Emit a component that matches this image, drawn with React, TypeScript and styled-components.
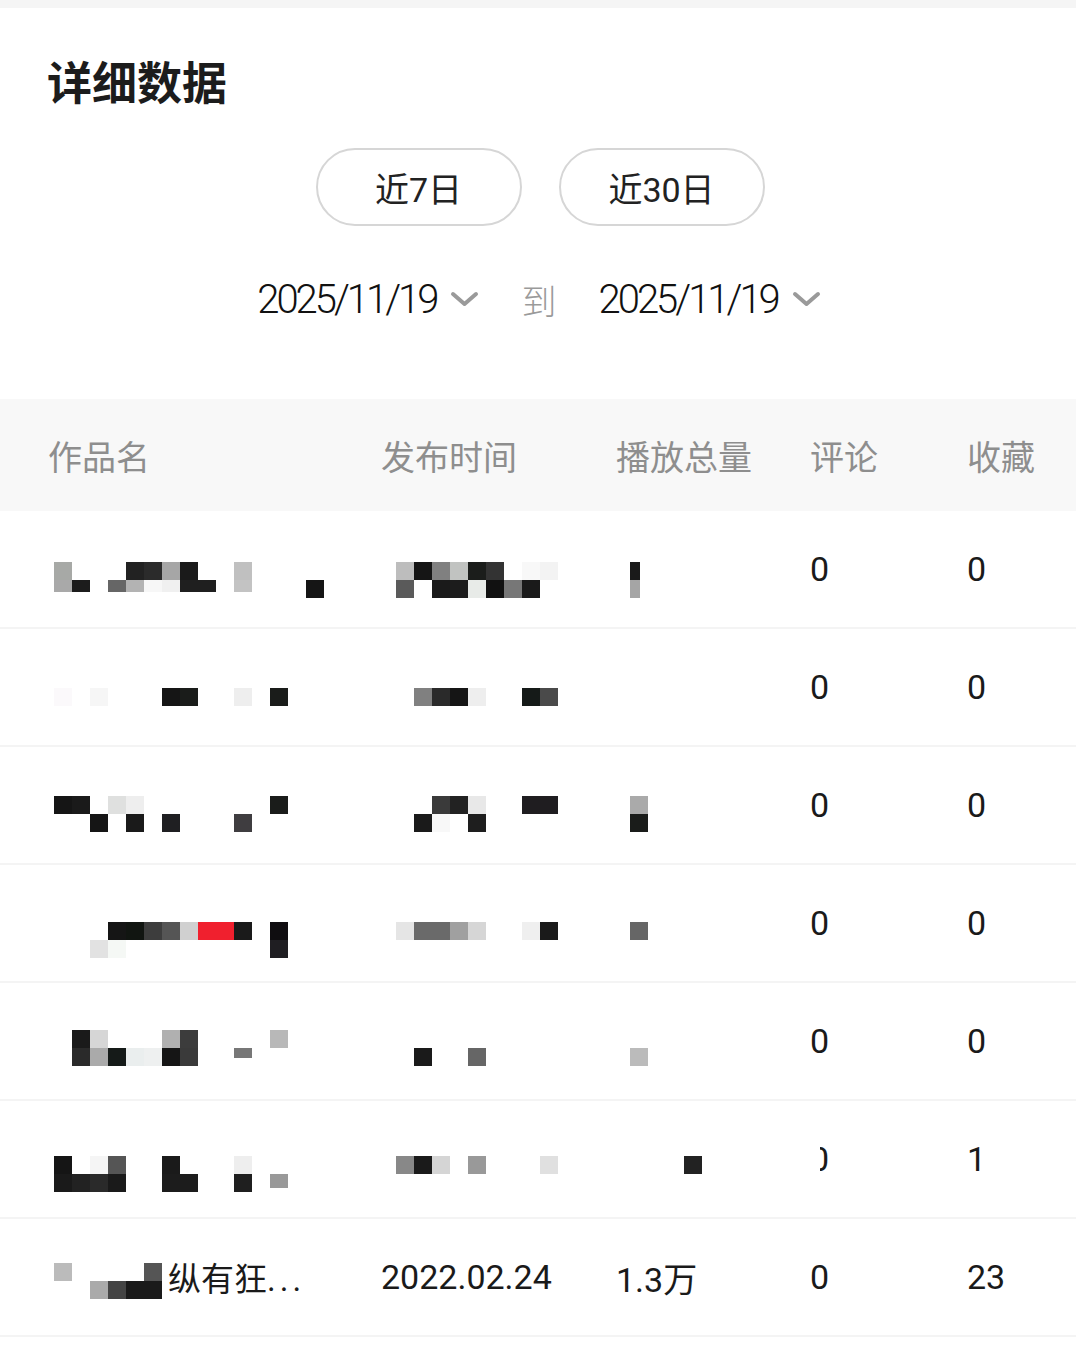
import React from 'react';
import styled, { createGlobalStyle } from 'styled-components';

/*
 * Data
 */

type Px = [number, number, string, number?, number?];

interface Item {
    shift: number;
    name: Px[];
    title?: string;
    date: Px[];
    dateText?: string;
    plays: Px[];
    playsText?: string;
    comments: string;
    clipComments?: boolean;
    favorites: string;
}

const CELL = 18;

const items: Item[] = [
    {
        shift: 51,
        name: [
            [0, 0, '#a7a9a6'], [0, 1, '#a9a9a9', 18, 12], [1, 1, '#1c1c1c', 18, 12], [3, 1, '#666666', 18, 12],
            [4, 0, '#222222'], [4, 1, '#b3b3b3', 18, 12], [5, 0, '#2b2b2b'], [5, 1, '#f7f7f7', 18, 12],
            [6, 0, '#a6a6a6'], [6, 1, '#f0f0f0', 18, 12], [7, 0, '#1a1a1a'], [7, 1, '#1f1f1f', 18, 12],
            [8, 1, '#1f1f1f', 18, 12], [10, 0, '#c0c0c0'], [10, 1, '#c3c3c3', 18, 12], [14, 1, '#151515'],
        ],
        date: [
            [0, 0, '#bdbdbd'], [0, 1, '#5a5a5a'], [1, 0, '#151515'], [2, 0, '#808080'], [2, 1, '#1a1a1a'],
            [3, 0, '#c1c3c1'], [3, 1, '#1c1c1c'], [4, 0, '#1b1d1b'], [4, 1, '#e8ebe8'], [5, 0, '#333333'],
            [5, 1, '#111111'], [6, 1, '#777777'], [7, 0, '#f8f8f8'], [7, 1, '#1a1a1a'], [8, 0, '#f3f3f3'],
        ],
        plays: [[0, 0, '#1a1a1a', 10], [0, 1, '#a5a5a5', 10]],
        comments: '0',
        favorites: '0',
    },
    {
        shift: 59,
        name: [
            [0, 0, '#fbf9fb'], [2, 0, '#f6f6f6'], [6, 0, '#151515'], [7, 0, '#1a1c1a'],
            [10, 0, '#eeeeee'], [12, 0, '#1a1c1a'],
        ],
        date: [
            [1, 0, '#808080'], [2, 0, '#2a2a2a'], [3, 0, '#151515'], [4, 0, '#eeeeee'],
            [7, 0, '#151a18'], [8, 0, '#4a4a4a'],
        ],
        plays: [],
        comments: '0',
        favorites: '0',
    },
    {
        shift: 49,
        name: [
            [0, 0, '#151515'], [1, 0, '#1a1a1a'], [2, 1, '#151515'], [3, 0, '#dfe0df'], [4, 0, '#eeeeee'],
            [4, 1, '#1a1a1a'], [6, 1, '#1f1f22'], [10, 1, '#3f3d40'], [12, 0, '#1a1c1a'],
        ],
        date: [
            [1, 1, '#1a1a1a'], [2, 0, '#3a3a3a'], [2, 1, '#f8f8f8'], [3, 0, '#222222'], [4, 0, '#e8e8e8'],
            [4, 1, '#1e1e1e'], [7, 0, '#1f1d20'], [8, 0, '#1f1d20'],
        ],
        plays: [[0, 0, '#aaaaaa'], [0, 1, '#1a1c1a']],
        comments: '0',
        favorites: '0',
    },
    {
        shift: 57,
        name: [
            [2, 1, '#e2e2e2'], [3, 0, '#151515'], [3, 1, '#f5f8f5'], [4, 0, '#111511'], [5, 0, '#3d3d3d'],
            [6, 0, '#555555'], [7, 0, '#d0d0d0'], [8, 0, '#f0202e'], [9, 0, '#f0202e'], [10, 0, '#1a1a1a'],
            [12, 0, '#0f0d10'], [12, 1, '#1f1e22'],
        ],
        date: [
            [0, 0, '#e5e5e5'], [1, 0, '#6a6a6a'], [2, 0, '#6a6a6a'], [3, 0, '#a0a0a0'], [4, 0, '#d6d6d6'],
            [7, 0, '#efefef'], [8, 0, '#1a1a1a'],
        ],
        plays: [[0, 0, '#666666']],
        comments: '0',
        favorites: '0',
    },
    {
        shift: 47,
        name: [
            [1, 0, '#1a1a1a'], [1, 1, '#2a2a2a'], [2, 0, '#d6d6d6'], [2, 1, '#aaaaaa'], [3, 1, '#151a18'],
            [4, 1, '#eaeeee'], [5, 1, '#eef0f0'], [6, 0, '#b0b0b0'], [6, 1, '#151515'], [7, 0, '#3c3c3c'],
            [7, 1, '#3a3a3a'], [10, 1, '#777777', 18, 10], [12, 0, '#b8b8b8'],
        ],
        date: [[1, 1, '#1a1a1a'], [4, 1, '#666666']],
        plays: [[0, 1, '#bbbbbb']],
        comments: '0',
        favorites: '0',
    },
    {
        shift: 55,
        name: [
            [0, 0, '#151515'], [0, 1, '#1a1a1a'], [1, 1, '#222222'], [2, 0, '#f5f5f5'], [2, 1, '#2a2a2a'],
            [3, 0, '#555555'], [3, 1, '#1a1a1a'], [6, 0, '#1a1a1a'], [6, 1, '#1c1c1c'], [7, 1, '#1c1c1c'],
            [10, 0, '#eeeeee'], [10, 1, '#1f1f1f'], [12, 1, '#999999', 18, 14],
        ],
        date: [
            [0, 0, '#888888'], [1, 0, '#1a1a1a'], [2, 0, '#d5d5d5'], [4, 0, '#999999'], [8, 0, '#e0e0e0'],
        ],
        plays: [[3, 0, '#222222']],
        comments: '0',
        clipComments: true,
        favorites: '1',
    },
    {
        shift: 45,
        name: [
            [0, 0, '#bbbbbb'], [2, 1, '#aaaaaa'], [3, 1, '#444444'], [4, 1, '#1a1a1a'],
            [5, 0, '#555555'], [5, 1, '#1a1a1a'],
        ],
        title: '纵有狂...',
        date: [],
        dateText: '2022.02.24',
        plays: [],
        playsText: '1.3万',
        comments: '0',
        favorites: '23',
    },
];

/*
 * Global
 */

const GlobalStyle = createGlobalStyle`
    body {
        margin: 0;
        background: #ffffff;
        font-family: Roboto, "Noto Sans CJK SC", sans-serif;
        color: #1a1a1a;
    }
`;

/*
 * Top part
 */

const Page = styled.div`
    width: 1076px;
    min-height: 1350px;
    background: #ffffff;
`;

const TopStrip = styled.div`
    height: 8px;
    background: #f5f5f5;
`;

const Title = styled.h1`
    margin: 42px 0 0 47px;
    font-family: "Noto Sans CJK SC", sans-serif;
    font-size: 45px;
    line-height: 62px;
    font-weight: 700;
    color: #1c1c1c;
`;

const RangeButtons = styled.div`
    display: flex;
    justify-content: center;
    gap: 37px;
    margin-top: 36px;
    padding-left: 4px;
`;

const RangeButton = styled.button`
    width: 206px;
    height: 78px;
    box-sizing: border-box;
    border: 2px solid #d6d6d6;
    border-radius: 40px;
    background: #ffffff;
    font-family: Roboto, "Noto Sans CJK SC", sans-serif;
    font-size: 34px;
    color: #222222;
    display: flex;
    align-items: center;
    justify-content: center;
    padding: 0;
`;

const DateRow = styled.div`
    display: flex;
    justify-content: center;
    align-items: center;
    gap: 42px;
    height: 60px;
    margin-top: 43px;
    padding-left: 2px;
`;

const DatePicker = styled.div`
    display: flex;
    align-items: center;
    gap: 14px;
`;

const DateText = styled.span`
    font-size: 40px;
    font-weight: 300;
    letter-spacing: -3px;
    color: #111111;
`;

const ToWord = styled.span`
    font-family: "Noto Sans CJK SC", sans-serif;
    font-size: 35px;
    font-weight: 300;
    color: #9a9a9a;
`;

const Chevron = () => (
    <svg width="29" height="16" viewBox="0 0 29 16">
        <polyline points="3,3 14.5,13 26,3" fill="none" stroke="#9a9a9a" strokeWidth="4" strokeLinecap="round" strokeLinejoin="round" />
    </svg>
);

/*
 * Table
 */

const COLUMNS = '333px 235px 194px 157px 1fr';

const Table = styled.div`
    margin-top: 70px;
`;

const HeaderRow = styled.div`
    display: grid;
    grid-template-columns: ${COLUMNS};
    align-items: center;
    height: 112px;
    padding-left: 48px;
    background: #f8f8f8;
    font-family: "Noto Sans CJK SC", sans-serif;
    font-size: 34px;
    color: #8e8e8e;
`;

const Row = styled.div`
    display: grid;
    grid-template-columns: ${COLUMNS};
    align-items: center;
    height: 118px;
    box-sizing: border-box;
    padding-left: 48px;
    border-bottom: 2px solid #f4f4f4;
`;

const Cell = styled.div`
    display: flex;
    align-items: center;
    font-size: 34px;
    color: #1a1a1a;
    white-space: nowrap;
`;

const MosaicCell = styled.div<{ $shift: number; $indent: number }>`
    align-self: start;
    margin-top: ${(p) => p.$shift}px;
    margin-left: ${(p) => p.$indent}px;
    height: 36px;
`;

const NameWithText = styled.div`
    display: flex;
    align-items: center;
    gap: 6px;
    margin-left: 6px;
    font-size: 33px;
    white-space: nowrap;

    svg {
        margin-top: 8px;
    }
`;

const TitleText = styled.span`
    letter-spacing: 0;

    em {
        font-style: normal;
        letter-spacing: 4px;
    }
`;

const ClippedValue = styled.span`
    clip-path: inset(0 0 0 52%);
`;

const Mosaic = ({ cells }: { cells: Px[] }) => {
    if (!cells.length) return null;
    const cols = Math.max(...cells.map((c) => c[0])) + 1;
    return (
        <svg width={cols * CELL} height={CELL * 2} shapeRendering="crispEdges">
            {cells.map(([c, r, color, w = CELL, h = CELL], i) => (
                <rect key={i} x={c * CELL} y={r * CELL} width={w} height={h} fill={color} />
            ))}
        </svg>
    );
};

const App = () => {
    return (
        <Page>
            <GlobalStyle />
            <TopStrip />
            <Title>详细数据</Title>
            <RangeButtons>
                <RangeButton>近7日</RangeButton>
                <RangeButton>近30日</RangeButton>
            </RangeButtons>
            <DateRow>
                <DatePicker>
                    <DateText>2025/11/19</DateText>
                    <Chevron />
                </DatePicker>
                <ToWord>到</ToWord>
                <DatePicker>
                    <DateText>2025/11/19</DateText>
                    <Chevron />
                </DatePicker>
            </DateRow>
            <Table>
                <HeaderRow>
                    <span>作品名</span>
                    <span>发布时间</span>
                    <span>播放总量</span>
                    <span>评论</span>
                    <span>收藏</span>
                </HeaderRow>
                {items.map((item, i) => (
                    <Row key={i}>
                        {item.title ? (
                            <NameWithText>
                                <Mosaic cells={item.name} />
                                <TitleText>
                                    {item.title.replace('...', '')}
                                    <em>...</em>
                                </TitleText>
                            </NameWithText>
                        ) : (
                            <MosaicCell $shift={item.shift} $indent={6}>
                                <Mosaic cells={item.name} />
                            </MosaicCell>
                        )}
                        {item.dateText ? (
                            <Cell>{item.dateText}</Cell>
                        ) : (
                            <MosaicCell $shift={item.shift} $indent={15}>
                                <Mosaic cells={item.date} />
                            </MosaicCell>
                        )}
                        {item.playsText ? (
                            <Cell>{item.playsText}</Cell>
                        ) : (
                            <MosaicCell $shift={item.shift} $indent={14}>
                                <Mosaic cells={item.plays} />
                            </MosaicCell>
                        )}
                        <Cell>{item.clipComments ? <ClippedValue>{item.comments}</ClippedValue> : item.comments}</Cell>
                        <Cell>{item.favorites}</Cell>
                    </Row>
                ))}
            </Table>
        </Page>
    );
};

export default App;
